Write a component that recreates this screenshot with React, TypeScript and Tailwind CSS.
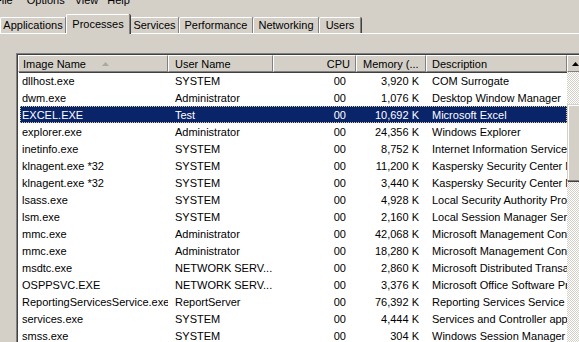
import { FC } from "react";

type Proc = {
  image: string;
  user: string;
  cpu: string;
  mem: string;
  desc: string;
};

const procs: Proc[] = [
  { image: "dllhost.exe", user: "SYSTEM", cpu: "00", mem: "3,920 K", desc: "COM Surrogate" },
  { image: "dwm.exe", user: "Administrator", cpu: "00", mem: "1,076 K", desc: "Desktop Window Manager" },
  { image: "EXCEL.EXE", user: "Test", cpu: "00", mem: "10,692 K", desc: "Microsoft Excel" },
  { image: "explorer.exe", user: "Administrator", cpu: "00", mem: "24,356 K", desc: "Windows Explorer" },
  { image: "inetinfo.exe", user: "SYSTEM", cpu: "00", mem: "8,752 K", desc: "Internet Information Services" },
  { image: "klnagent.exe *32", user: "SYSTEM", cpu: "00", mem: "11,200 K", desc: "Kaspersky Security Center Network Agent" },
  { image: "klnagent.exe *32", user: "SYSTEM", cpu: "00", mem: "3,440 K", desc: "Kaspersky Security Center Network Agent" },
  { image: "lsass.exe", user: "SYSTEM", cpu: "00", mem: "4,928 K", desc: "Local Security Authority Process" },
  { image: "lsm.exe", user: "SYSTEM", cpu: "00", mem: "2,160 K", desc: "Local Session Manager Service" },
  { image: "mmc.exe", user: "Administrator", cpu: "00", mem: "42,068 K", desc: "Microsoft Management Console" },
  { image: "mmc.exe", user: "Administrator", cpu: "00", mem: "18,280 K", desc: "Microsoft Management Console" },
  { image: "msdtc.exe", user: "NETWORK SERV...", cpu: "00", mem: "2,860 K", desc: "Microsoft Distributed Transaction Coordinator" },
  { image: "OSPPSVC.EXE", user: "NETWORK SERV...", cpu: "00", mem: "3,376 K", desc: "Microsoft Office Software Protection Platform" },
  { image: "ReportingServicesService.exe", user: "ReportServer", cpu: "00", mem: "76,392 K", desc: "Reporting Services Service" },
  { image: "services.exe", user: "SYSTEM", cpu: "00", mem: "4,444 K", desc: "Services and Controller app" },
  { image: "smss.exe", user: "SYSTEM", cpu: "00", mem: "304 K", desc: "Windows Session Manager" },
];

const tabs = [
  { label: "Applications", w: "w-[66px]" },
  { label: "Processes", w: "w-[64px]", active: true },
  { label: "Services", w: "w-[49px]" },
  { label: "Performance", w: "w-[74px]" },
  { label: "Networking", w: "w-[66px]" },
  { label: "Users", w: "w-[42px]" },
];

const headerCell =
  "h-[17px] flex items-center pt-px shrink-0 bg-[#d4d0c8] border-t border-l border-white border-r border-r-[#808080] border-b border-b-[#808080] shadow-[1px_1px_0_#404040] overflow-hidden whitespace-nowrap";

const checker =
  "bg-[repeating-conic-gradient(#d4d0c8_0_25%,#ffffff_0_50%)] bg-[length:2px_2px]";

const App: FC = () => {
  return (
    <div className="w-[579px] h-[342px] overflow-hidden bg-[#d4d0c8] text-[11px] text-black font-['Liberation_Sans',Arial,sans-serif] leading-[13px]">
      {/* menu bar, cut off at top */}
      <div className="flex -mt-[6px] h-[13px] whitespace-nowrap">
        <span className="-ml-[5px]">File</span>
        <span className="ml-[14px]">Options</span>
        <span className="ml-[10px]">View</span>
        <span className="ml-[9px]">Help</span>
      </div>

      {/* tabs */}
      <div className="mt-[8px] flex items-end h-[19px] border-b border-white">
        {tabs.map((t) =>
          t.active ? (
            <div
              key={t.label}
              className={`${t.w} relative z-10 -mb-px h-[20px] flex items-start pt-[3px] justify-center bg-[#d4d0c8] border-t border-l border-white border-r border-r-[#808080] shadow-[1px_0_0_#404040] rounded-t-[2px]`}
            >
              {t.label}
            </div>
          ) : (
            <div
              key={t.label}
              className={`${t.w} h-[16px] flex items-center justify-center border-t border-l border-white border-r border-r-[#808080] shadow-[1px_0_0_#404040] rounded-t-[2px]`}
            >
              {t.label}
            </div>
          )
        )}
      </div>

      {/* process list */}
      <div className="mt-[19px] ml-[16px] w-[600px] border-t border-l border-[#808080]">
        <div className="border-t border-l border-[#404040] bg-white">
          {/* header */}
          <div className="flex">
            <div className={`${headerCell} w-[150px] pl-[4px]`}>
              Image Name
              <svg width="7" height="4" viewBox="0 0 7 4" className="ml-[16px]">
                <path d="M3.5 0 L7 4 L0 4 Z" fill="#a8a8a0" />
              </svg>
            </div>
            <div className={`${headerCell} w-[105px] pl-[6px]`}>User Name</div>
            <div className={`${headerCell} w-[83px] justify-end pr-[5px]`}>CPU</div>
            <div className={`${headerCell} w-[70px] pl-[6px]`}>Memory (...</div>
            <div className={`${headerCell} w-[141px] pl-[5px]`}>Description</div>
            <div className={`${headerCell} w-[16px] justify-center`}>
              <svg width="7" height="4" viewBox="0 0 7 4">
                <path d="M3.5 0 L7 4 L0 4 Z" fill="#000" />
              </svg>
            </div>
          </div>

          {/* rows + scrollbar */}
          <div className="flex">
            <div className="w-[549px] shrink-0">
              {procs.map((p, i) => {
                const sel = p.image === "EXCEL.EXE";
                return (
                  <div key={i} className="flex h-[17px] pl-[2px]">
                    <div
                      className={`flex items-center pt-[2px] w-full whitespace-nowrap overflow-hidden ${
                        sel
                          ? "bg-[#0a246a] text-white outline outline-1 outline-dotted outline-[#d8c890] -outline-offset-1"
                          : ""
                      }`}
                    >
                      <div className="w-[148px] shrink-0 pl-[2px] overflow-hidden">{p.image}</div>
                      <div className="w-[105px] shrink-0 pl-[7px] overflow-hidden">{p.user}</div>
                      <div className="w-[83px] shrink-0 flex justify-end pr-[10px]">{p.cpu}</div>
                      <div className="w-[70px] shrink-0 flex justify-end pr-[7px]">{p.mem}</div>
                      <div className="w-[141px] shrink-0 pl-[6px] overflow-hidden">{p.desc}</div>
                    </div>
                  </div>
                );
              })}
            </div>
            <div className={`w-[16px] shrink-0 flex flex-col ${checker}`}>
              <div className="h-[32px]" />
              <div className="h-[77px] bg-[#d4d0c8] border-t border-l border-[#d4d0c8] border-r border-r-[#808080] border-b border-b-[#808080] shadow-[inset_1px_1px_0_#ffffff,1px_1px_0_#404040]" />
              <div className="flex-1" />
            </div>
          </div>
        </div>
      </div>
    </div>
  );
};

export default App;
